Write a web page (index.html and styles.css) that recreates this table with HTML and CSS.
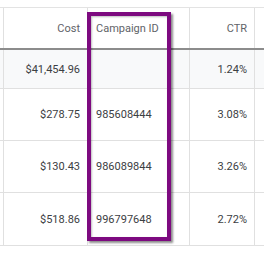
FILE: index.html
```html
<!DOCTYPE html>
<html>
<head>
<meta charset="utf-8">
<link rel="stylesheet" href="styles.css">
</head>
<body>
<div class="page">
  <div class="table">
    <div class="row head">
      <div class="cell edge"></div>
      <div class="cell num">Cost</div>
      <div class="cell txt">Campaign ID</div>
      <div class="cell num">CTR</div>
      <div class="cell last"></div>
    </div>
    <div class="row total">
      <div class="cell edge"></div>
      <div class="cell num">$41,454.96</div>
      <div class="cell txt"></div>
      <div class="cell num">1.24%</div>
      <div class="cell last"></div>
    </div>
    <div class="row r2">
      <div class="cell edge"></div>
      <div class="cell num">$278.75</div>
      <div class="cell txt">985608444</div>
      <div class="cell num">3.08%</div>
      <div class="cell last"></div>
    </div>
    <div class="row r3">
      <div class="cell edge"></div>
      <div class="cell num">$130.43</div>
      <div class="cell txt">986089844</div>
      <div class="cell num">3.26%</div>
      <div class="cell last"></div>
    </div>
    <div class="row r4">
      <div class="cell edge"></div>
      <div class="cell num">$518.86</div>
      <div class="cell txt">996797648</div>
      <div class="cell num">2.72%</div>
      <div class="cell last"></div>
    </div>
  </div>
  <div class="highlight"></div>
</div>
</body>
</html>
```
FILE: styles.css
```css
html, body {
  margin: 0;
  padding: 0;
  background: #ffffff;
}
.page {
  position: relative;
  width: 264px;
  height: 253px;
  padding-top: 7px;
  box-sizing: border-box;
  overflow: hidden;
  font-family: Roboto, "Liberation Sans", sans-serif;
  font-size: 11px;
  color: #3c4043;
}
.table {
  border-top: 1px solid #e3e3e3;
}
.row {
  display: grid;
  grid-template-columns: 4px 84px 102px 65px 1fr;
  border-bottom: 1px solid #e0e0e0;
}
.cell {
  display: flex;
  align-items: center;
  border-right: 1px solid #e0e0e0;
  padding: 0 8px;
  white-space: nowrap;
}
.cell.edge, .cell.last {
  padding: 0;
}
.cell.last {
  border-right: none;
}
.cell.num {
  justify-content: flex-end;
  padding-right: 7px;
}
.head {
  height: 40px;
  border-bottom: 2px solid #8c8c8c;
  color: #5f6368;
}
.total {
  height: 38px;
  background: #f8f9fa;
}
.r2 { height: 51px; }
.r3 { height: 51px; }
.r4 { height: 52px; }
.highlight {
  position: absolute;
  left: 87px;
  top: 12px;
  width: 84px;
  height: 229px;
  box-sizing: border-box;
  border: 4px solid #7d0a80;
  box-shadow: 2px 2px 2px rgba(0, 0, 0, 0.45), inset 1px 1px 2px rgba(0, 0, 0, 0.25);
}
```
